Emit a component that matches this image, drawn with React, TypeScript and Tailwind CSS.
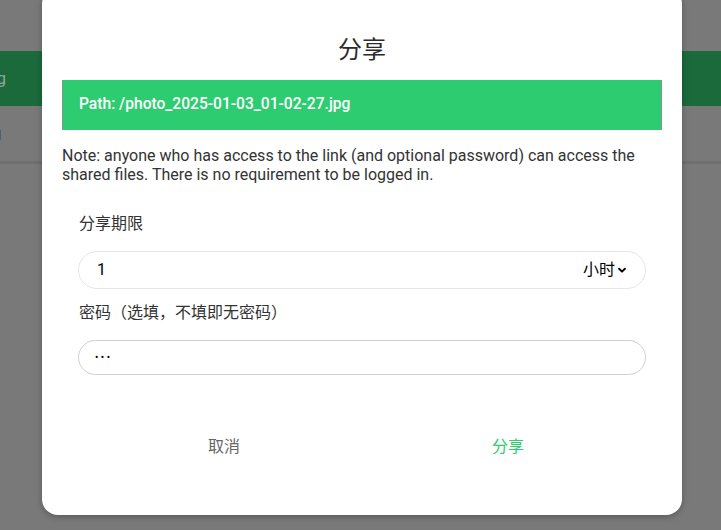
import { useState } from 'react';

const cjk = "font-['Roboto','Noto_Sans_CJK_SC',sans-serif]";

function ChevronDown() {
  return (
    <svg width="10" height="10" viewBox="0 0 24 24" fill="none" stroke="currentColor" strokeWidth="4.5" strokeLinecap="round" strokeLinejoin="round">
      <path d="M5 9l7 7 7-7" />
    </svg>
  );
}

function FileRows() {
  return (
    <div className="pt-[51px]">
      <div className="h-[55px] bg-[#1a6a3c] flex items-center text-[17px] text-[#8fa597] -ml-[13px]">ng</div>
      <div className="h-[55px] flex items-center text-[17px] text-[#3f3f3f] -ml-[8px]">g</div>
      <div className="h-[3px] bg-[#6f6f6f]" />
    </div>
  );
}

function ShareDialog() {
  const [expire, setExpire] = useState('1');
  const [password, setPassword] = useState('123');

  return (
    <div className="ml-[42px] -mt-[12px] w-[640px] rounded-[16px] bg-white shadow-[0_2px_6px_rgba(0,0,0,0.25)] pt-[46px] pb-[58px]">
      <h2 className="text-center text-[24px] leading-[32px] text-[#2b2b2b]">分享</h2>
      <div className="mx-[20px] mt-[14px]">
        <div className="h-[50px] bg-[#2ecc71] border-x border-[#7f9a88] flex items-center px-[16px] text-[15.6px] font-medium text-white">
          Path: /photo_2025-01-03_01-02-27.jpg
        </div>
        <p className="mt-[16px] text-[16px] leading-[19px] text-[#333]">
          Note: anyone who has access to the link (and optional password) can access the shared files. There is no requirement to be logged in.
        </p>
        <div className="px-[16px]">
          <label className="block mt-[30px] pl-[1px] text-[16px] leading-[20px] text-[#333]">分享期限</label>
          <div className="mt-[17px] h-[38px] rounded-full border border-[#e6e6e6] flex items-center pl-[18px] pr-[18px]">
            <input
              value={expire}
              onChange={(e) => setExpire(e.target.value)}
              className="flex-1 bg-transparent outline-none text-[16px] text-black"
            />
            <span className="-ml-[2px] flex items-center gap-[2px] text-[16px] text-black">
              小时
              <ChevronDown />
            </span>
          </div>
          <label className="block mt-[14px] pl-[1px] text-[16px] leading-[20px] text-[#333]">密码（选填，不填即无密码）</label>
          <div className="mt-[17px] h-[35px] rounded-[18px] border border-[#cfcfcf] flex items-center px-[16px]">
            <input
              type="password"
              value={password}
              onChange={(e) => setPassword(e.target.value)}
              className="flex-1 bg-transparent outline-none text-[10px] tracking-[2.5px] text-black"
            />
          </div>
        </div>
        <div className="mt-[62px] pl-[20px] pr-[12px] flex">
          <button className="flex-1 text-[16px] leading-[20px] text-[#666]">取消</button>
          <button className="flex-1 text-[16px] leading-[20px] text-[#2ecc71]">分享</button>
        </div>
      </div>
    </div>
  );
}

export default function App() {
  return (
    <div className={`relative h-[530px] w-[721px] overflow-hidden bg-[#797979] ${cjk}`}>
      <FileRows />
      <div className="absolute inset-0">
        <ShareDialog />
      </div>
    </div>
  );
}
